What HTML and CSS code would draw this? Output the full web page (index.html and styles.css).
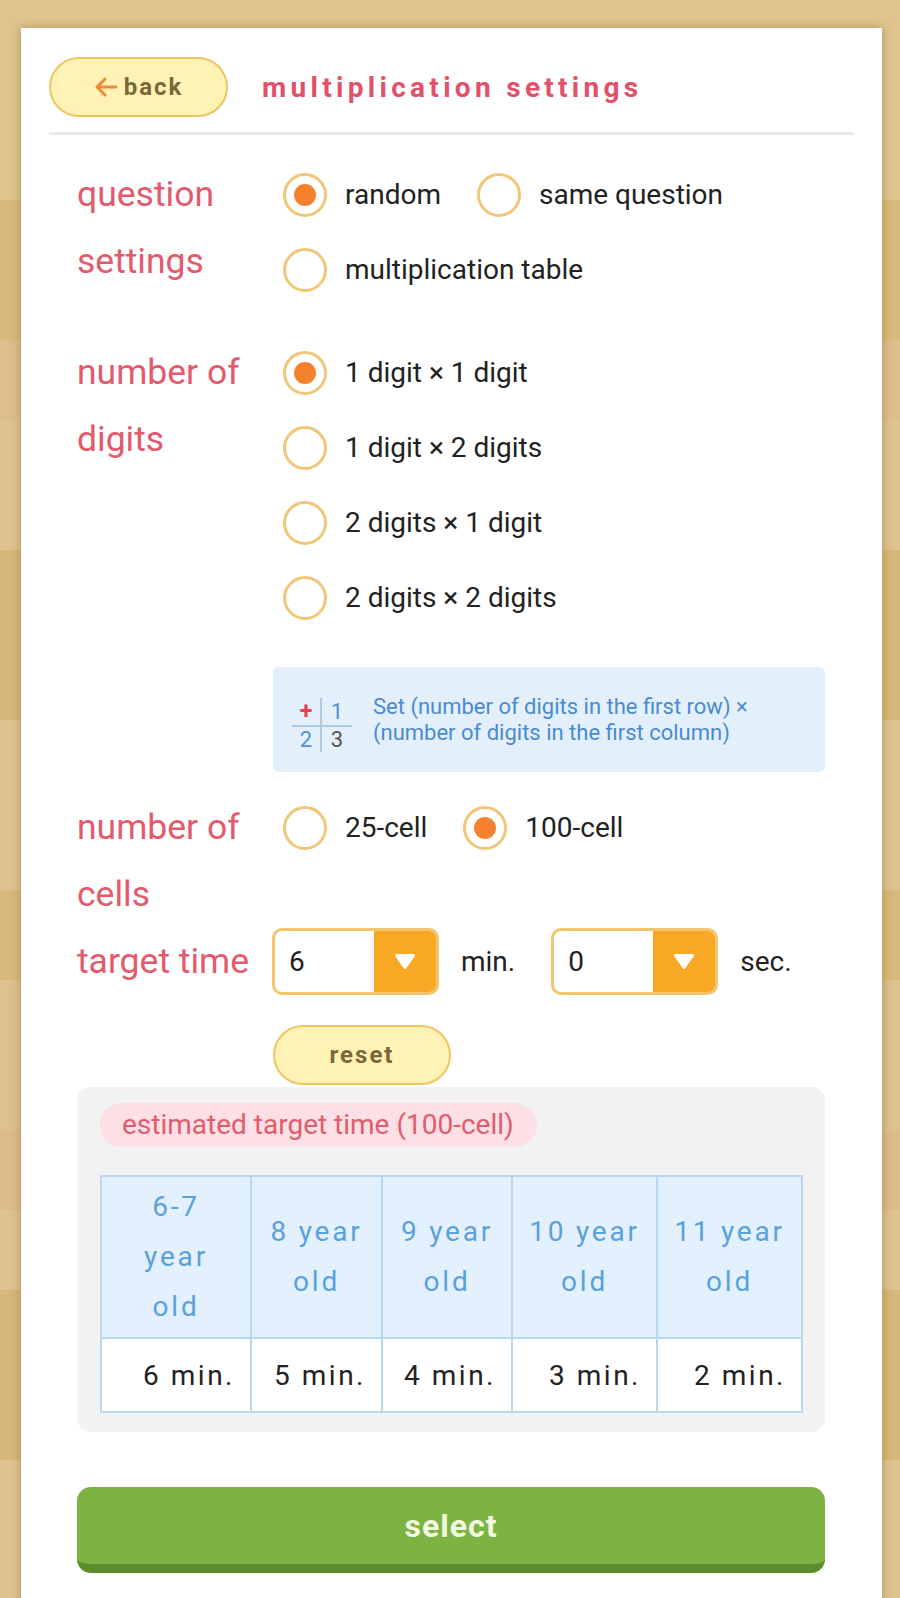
FILE: index.html
```html
<!DOCTYPE html>
<html lang="en">
<head>
<meta charset="utf-8">
<title>multiplication settings</title>
<link rel="stylesheet" href="styles.css">
</head>
<body>
<div class="page">
  <div class="card">
    <header class="top">
      <button class="back" type="button">
        <svg class="back-ico" width="24" height="22" viewBox="0 0 24 22"><path d="M22 11 H3 M11 3 L3 11 L11 19" fill="none" stroke="#f0883a" stroke-width="3" stroke-linecap="round" stroke-linejoin="round"/></svg>
        <span>back</span>
      </button>
      <h1 class="title">multiplication settings</h1>
    </header>
    <div class="divider"></div>

    <div class="content">
      <section class="field f-question">
        <div class="label">question<br>settings</div>
        <div class="controls">
          <div class="row">
            <span class="opt"><span class="radio on"></span>random</span>
            <span class="opt"><span class="radio"></span>same question</span>
          </div>
          <div class="row">
            <span class="opt"><span class="radio"></span>multiplication table</span>
          </div>
        </div>
      </section>

      <section class="field f-digits">
        <div class="label">number of<br>digits</div>
        <div class="controls">
          <div class="row"><span class="opt"><span class="radio on"></span>1 digit × 1 digit</span></div>
          <div class="row"><span class="opt"><span class="radio"></span>1 digit × 2 digits</span></div>
          <div class="row"><span class="opt"><span class="radio"></span>2 digits × 1 digit</span></div>
          <div class="row"><span class="opt"><span class="radio"></span>2 digits × 2 digits</span></div>
          <div class="info">
            <div class="grid-icon">
              <span class="gi top plus">+</span><span class="gi top blue">1</span><span class="gi bottom blue">2</span><span class="gi bottom gray">3</span>
            </div>
            <p class="info-text">Set (number of digits in the first row) ×<br>(number of digits in the first column)</p>
          </div>
        </div>
      </section>

      <section class="field f-cells">
        <div class="label">number of<br>cells</div>
        <div class="controls">
          <div class="row">
            <span class="opt"><span class="radio"></span>25-cell</span>
            <span class="opt"><span class="radio on"></span>100-cell</span>
          </div>
        </div>
      </section>

      <section class="field f-time">
        <div class="label">target time</div>
        <div class="controls time-row">
          <div class="select">
            <span class="val">6</span>
            <span class="arrow"><svg width="22" height="17" viewBox="0 0 22 17"><path d="M2.5 2.5 H19.5 L11 14.5 Z" fill="#fff" stroke="#fff" stroke-width="3" stroke-linejoin="round"/></svg></span>
          </div>
          <span class="unit">min.</span>
          <div class="select">
            <span class="val">0</span>
            <span class="arrow"><svg width="22" height="17" viewBox="0 0 22 17"><path d="M2.5 2.5 H19.5 L11 14.5 Z" fill="#fff" stroke="#fff" stroke-width="3" stroke-linejoin="round"/></svg></span>
          </div>
          <span class="unit last">sec.</span>
        </div>
      </section>

      <div class="reset-row">
        <button class="reset" type="button">reset</button>
      </div>

      <div class="panel">
        <span class="tag">estimated target time (100-cell)</span>
        <table class="est">
          <colgroup>
            <col class="w1"><col class="w2"><col class="w3"><col class="w4"><col class="w5">
          </colgroup>
          <thead>
            <tr>
              <th>6-7<br>year<br>old</th>
              <th>8 year<br>old</th>
              <th>9 year<br>old</th>
              <th>10 year<br>old</th>
              <th>11 year<br>old</th>
            </tr>
          </thead>
          <tbody>
            <tr>
              <td>6 min.</td>
              <td>5 min.</td>
              <td>4 min.</td>
              <td>3 min.</td>
              <td>2 min.</td>
            </tr>
          </tbody>
        </table>
      </div>

      <button class="submit" type="button">select</button>
    </div>
  </div>
</div>
</body>
</html>
```

FILE: styles.css
```css
* { box-sizing: border-box; }

html, body { margin: 0; padding: 0; }

body {
  font-family: Roboto, "Noto Sans", "Liberation Sans", sans-serif;
  min-height: 1598px;
  background: linear-gradient(to bottom,
    #dfc48e 0, #dfc48e 200px,
    #d9ba7c 200px, #d9ba7c 340px,
    #dcbf8b 340px, #dcbf8b 420px,
    #dfc38e 420px, #dfc38e 550px,
    #d8b87a 550px, #d8b87a 720px,
    #dfc38e 720px, #dfc38e 890px,
    #d9ba7c 890px, #d9ba7c 980px,
    #dec28d 980px, #dec28d 1130px,
    #dcbd8a 1130px, #dcbd8a 1210px,
    #dfc38e 1210px, #dfc38e 1290px,
    #d8b87a 1290px, #d8b87a 1460px,
    #dfc38e 1460px, #dfc38e 1598px);
}

.page {
  padding: 28px 18px 0 21px;
}

.card {
  background: #fff;
  min-height: 1570px;
  padding: 29px 28px 40px 28px;
  box-shadow: 0 0 10px rgba(90, 60, 10, 0.35);
}

/* header */
.top {
  display: flex;
  align-items: center;
  gap: 34px;
}

.back {
  width: 179px;
  height: 60px;
  border: 2px solid #efc562;
  background: #fff2b5;
  border-radius: 30px;
  display: flex;
  align-items: center;
  justify-content: center;
  gap: 6px;
  padding: 0;
  font-family: Roboto, "Noto Sans", sans-serif;
  font-weight: 700;
  font-size: 24px;
  letter-spacing: 2px;
  color: #7b683a;
}

.back-ico { flex: none; }

.title {
  margin: 0;
  font-size: 28px;
  font-weight: 700;
  letter-spacing: 4.3px;
  color: #e2506a;
}

.divider {
  height: 3px;
  background: #e9e9e9;
  margin-top: 15px;
}

/* content */
.content {
  margin: 0 29px 0 28px;
}

.field {
  display: grid;
  grid-template-columns: 196px 1fr;
}

.f-question { margin-top: 22px; }
.f-digits { margin-top: 28px; }
.f-cells { margin-top: 18px; }

.label {
  font-size: 35.5px;
  line-height: 67px;
  padding-top: 4px;
  color: #e35a6d;
}

.f-time .label { padding-top: 0; }

.row {
  height: 75px;
  display: flex;
  align-items: center;
}

.opt {
  display: flex;
  align-items: center;
  margin-right: 26px;
  font-size: 28px;
  color: #222;
}

.radio {
  flex: none;
  width: 44px;
  height: 44px;
  border: 3px solid #f2c679;
  border-radius: 50%;
  margin: 0 18px 0 10px;
  display: flex;
  align-items: center;
  justify-content: center;
  background: #fff;
}

.radio.on::after {
  content: "";
  width: 22px;
  height: 22px;
  border-radius: 50%;
  background: #f5812d;
}

/* info box */
.info {
  margin-top: 32px;
  height: 105px;
  background: #e3f0fb;
  border-radius: 6px;
  display: flex;
  align-items: center;
  gap: 21px;
  padding: 0 19px;
}

.grid-icon {
  flex: none;
  margin-top: 10px;
  display: grid;
  grid-template-columns: 28px 30px;
  gap: 2px;
  background: #adc9e2;
}

.gi {
  background: #e3f0fb;
  display: flex;
  align-items: center;
  justify-content: center;
  line-height: normal;
  font-size: 22px;
}

.gi.plus { color: #e8404f; font-weight: 700; font-size: 23px; }
.gi.blue { color: #4f90d4; }
.gi.gray { color: #555; }

.info-text {
  margin: 0;
  font-size: 22px;
  line-height: 26px;
  color: #4a8bd0;
}

/* target time */
.time-row {
  display: flex;
  align-items: center;
  height: 67px;
}

.select {
  width: 167px;
  height: 67px;
  border: 3px solid #f3c56f;
  border-radius: 10px;
  overflow: hidden;
  display: flex;
  margin-left: -1px;
  background: #fff;
}

.select .val {
  flex: 1;
  padding-left: 14px;
  font-size: 28px;
  line-height: 61px;
  color: #222;
}

.select .arrow {
  width: 62px;
  background: #f9a825;
  display: flex;
  align-items: center;
  justify-content: center;
}

.unit {
  font-size: 28px;
  color: #222;
  margin: 0 37px 0 22px;
}

.unit.last { margin-right: 0; }

/* reset */
.reset-row {
  margin-top: 30px;
  padding-left: 196px;
}

.reset {
  display: block;
  width: 178px;
  height: 60px;
  border: 2px solid #efc562;
  background: #fff2b5;
  border-radius: 30px;
  padding: 0;
  font-family: Roboto, "Noto Sans", sans-serif;
  font-weight: 700;
  font-size: 24px;
  letter-spacing: 2px;
  color: #7b683a;
}

/* estimate panel */
.panel {
  margin-top: 2px;
  background: #f2f2f2;
  border-radius: 14px;
  padding: 16px 24px 19px 23px;
  display: flex;
  flex-direction: column;
  align-items: flex-start;
}

.tag {
  display: block;
  height: 44px;
  line-height: 44px;
  padding: 0 23px 0 22px;
  border-radius: 22px;
  background: #fde0e5;
  color: #e15c6c;
  font-size: 28px;
}

.est {
  margin-top: 28px;
  width: 701px;
  border-collapse: collapse;
  table-layout: fixed;
}

.w1 { width: 150px; }
.w2 { width: 131px; }
.w3 { width: 130px; }
.w4 { width: 145px; }
.w5 { width: 145px; }

.est th {
  border: 2px solid #b7d7f2;
  background: #e2f1fd;
  color: #5aa1dc;
  font-weight: 400;
  font-size: 28px;
  letter-spacing: 2.8px;
  line-height: 50px;
  padding: 5px 0;
  text-align: center;
  vertical-align: middle;
}

.est td {
  border: 2px solid #b7d7f2;
  background: #fff;
  color: #222;
  font-size: 28px;
  letter-spacing: 2.5px;
  line-height: 36px;
  padding: 19px 15px 17px 0;
  text-align: right;
}

/* select button */
.submit {
  display: flex;
  align-items: center;
  justify-content: center;
  width: 100%;
  margin-top: 55px;
  height: 86px;
  background: #7cb342;
  border: none;
  border-bottom: 9px solid #5b8c2e;
  border-radius: 14px;
  padding: 0;
  font-family: Roboto, "Noto Sans", sans-serif;
  font-weight: 700;
  font-size: 32px;
  letter-spacing: 1px;
  color: #f3f8e1;
}
```
